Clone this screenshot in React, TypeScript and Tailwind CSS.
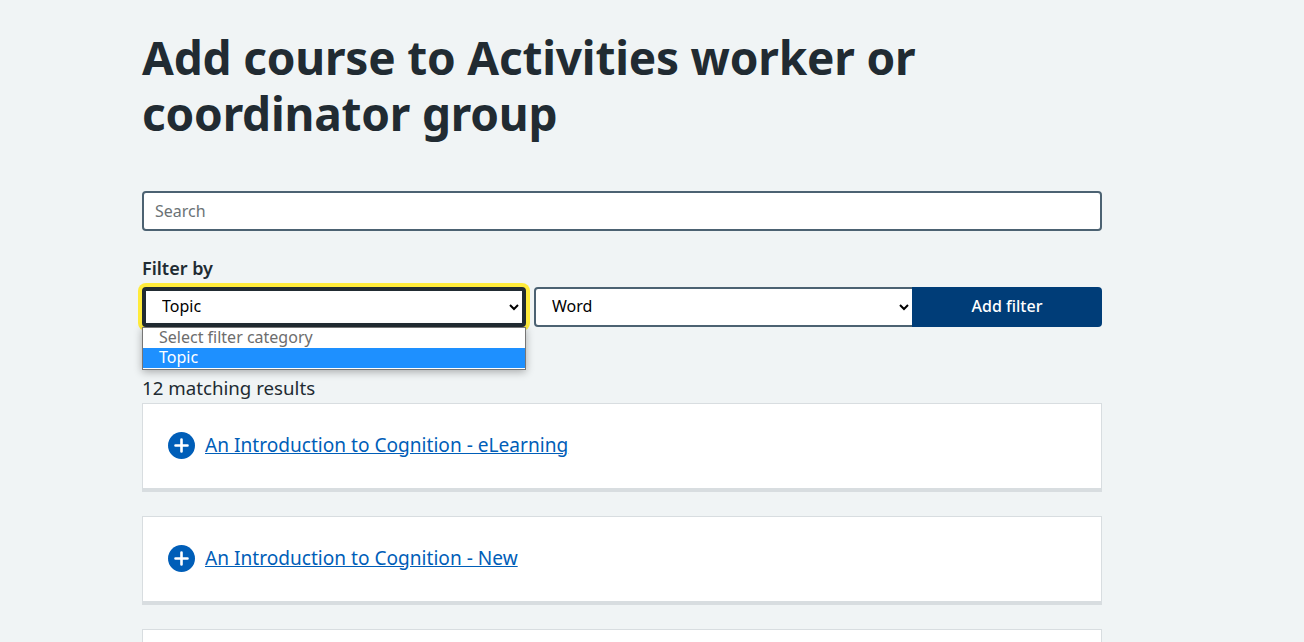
import React from "react";

function Card({ title }: { title: string }) {
  return (
    <div className="mb-6 h-[89px] bg-white border border-[#d8dde0] border-b-4 flex items-center pl-[25px] pb-[3px]">
      <svg width="27" height="27" viewBox="0 0 27 27" className="mr-[10px] mt-[2px] shrink-0">
        <circle cx="13.5" cy="13.5" r="13.5" fill="#005eb8" />
        <path d="M13.5 7.5v12M7.5 13.5h12" stroke="#fff" strokeWidth="2.6" strokeLinecap="round" />
      </svg>
      <a href="#" className="text-[19.1px] leading-[28px] text-[#005eb8] underline">{title}</a>
    </div>
  );
}

export default function App() {
  return (
    <div className="h-[642px] overflow-hidden bg-[#f0f4f5] text-[#212b32] font-['Noto_Sans',sans-serif]">
      <div className="w-[960px] ml-[142px]">
        <h1 className="pt-[29px] text-[46px] leading-[56px] font-bold tracking-[-0.2px] text-[#212b32]">
          Add course to Activities worker or coordinator group
        </h1>
        <input
          placeholder="Search"
          className="block mt-[50px] w-full h-[40px] bg-white border-2 border-[#4c6272] rounded-[4px] px-[11px] text-[16px] placeholder:text-[#6b7275]"
        />
        <div className="mt-[25px] text-[18px] leading-[24px] font-semibold">Filter by</div>
        <div className="relative mt-[7px] flex h-[40px]">
          <select
            defaultValue="Topic"
            className="w-[384px] h-[40px] mr-[8px] bg-white border-4 border-[#212b32] rounded-[4px] pl-[12px] pr-1 pb-[2px] text-[16px] text-black shadow-[0_0_0_4px_#ffeb3b]"
          >
            <option>Select filter category</option>
            <option>Topic</option>
          </select>
          <select className="flex-1 h-[40px] bg-white border-2 border-[#4c6272] rounded-l-[4px] pl-[12px] pb-[2px] text-[16px] text-black">
            <option>Word</option>
          </select>
          <button className="relative w-[190px] h-[40px] -ml-[2px] pb-[2px] bg-[#003d78] text-white text-[16px] font-medium rounded-r-[4px]">
            Add filter
          </button>
          <div className="absolute left-0 top-[40px] w-[384px] h-[43px] bg-white border border-[#767676] shadow-[0_2px_8px_rgba(0,0,0,0.3)] text-[16px] leading-[18px] z-10">
            <div className="pl-4 h-[20px] text-[#6d6d6d]">Select filter category</div>
            <div className="pl-4 h-[20px] bg-[#1e90ff] text-white">Topic</div>
          </div>
        </div>
        <div className="mt-[49px] mb-[3px] text-[18.7px] leading-[24px]">12 matching results</div>
        <Card title="An Introduction to Cognition - eLearning" />
        <Card title="An Introduction to Cognition - New" />
        <Card title="" />
      </div>
    </div>
  );
}
